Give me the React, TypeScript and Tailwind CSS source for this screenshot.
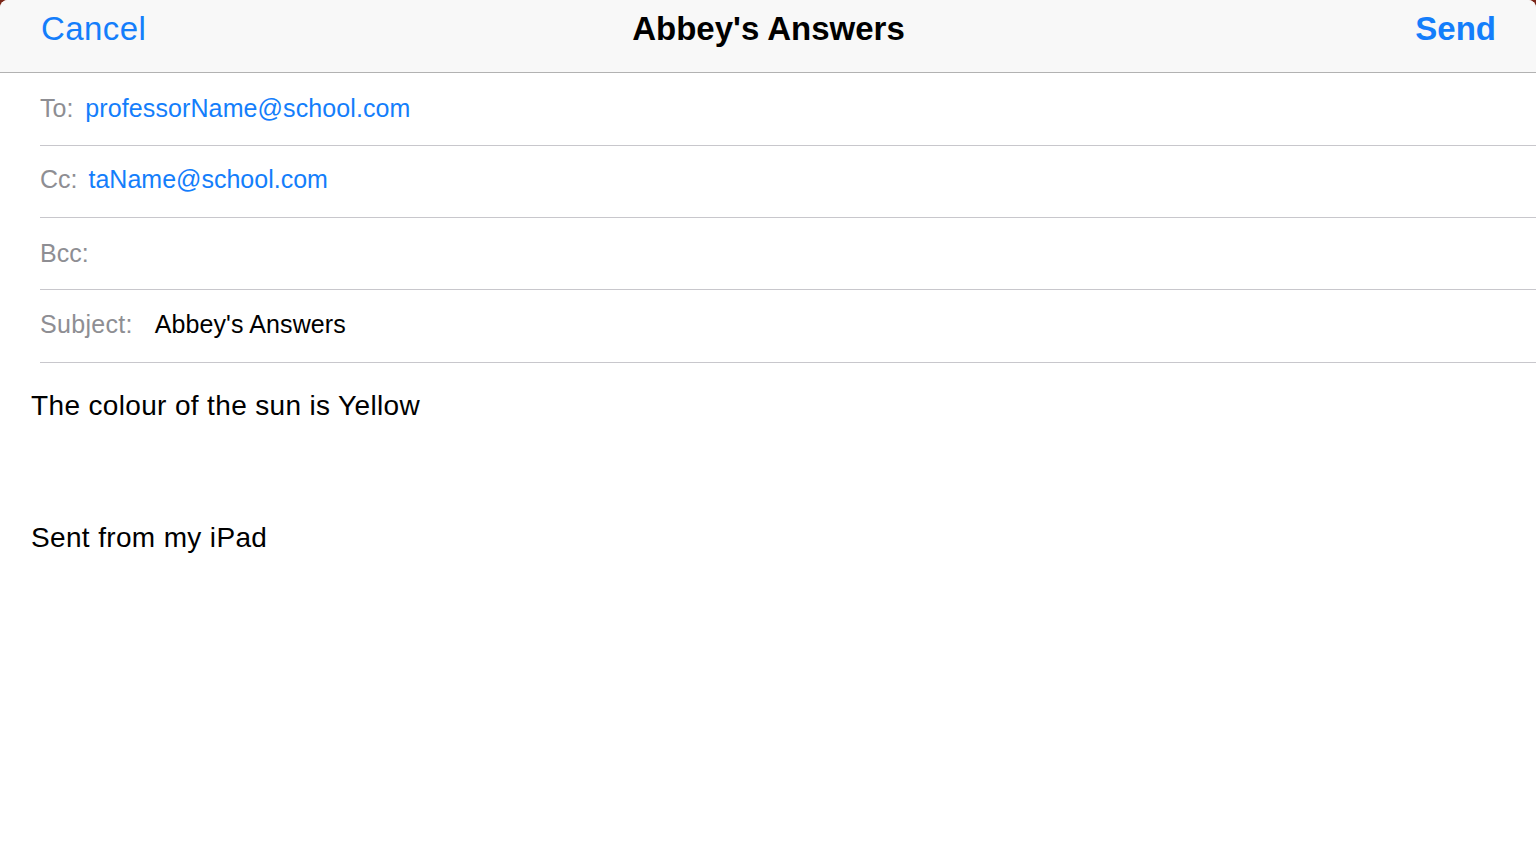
import React from "react";

export default function App() {
  const font = { fontFamily: '"Liberation Sans", Arial, sans-serif' };
  return (
    <div className="min-h-screen w-full bg-[#7a2618]" style={font}>
      <div className="min-h-screen w-full rounded-t-[8px] bg-white overflow-hidden">
        <header className="grid h-[73px] grid-cols-3 border-b border-[#b2b2b2] bg-[#f8f8f8] pt-[12px] pl-[41px] pr-[40px]">
          <span className="justify-self-start text-[33px] leading-[33px] tracking-[0.4px] text-[#147efb]">Cancel</span>
          <span className="justify-self-center whitespace-nowrap text-[33px] font-bold leading-[33px] text-black">
            Abbey's Answers
          </span>
          <span className="justify-self-end text-[33px] font-bold leading-[33px] text-[#147efb]">Send</span>
        </header>

        <div className="pl-[40px]">
          <div className="flex h-[73px] items-center border-b border-[#c8c7cc] text-[25px]">
            <span className="text-[#8e8e93]">To:</span>
            <span className="ml-[12px] tracking-[0.1px] text-[#147efb]">professorName@school.com</span>
          </div>
          <div className="flex h-[72px] items-center border-b border-[#c8c7cc] pb-[3px] text-[25px]">
            <span className="text-[#8e8e93]">Cc:</span>
            <span className="ml-[11px] text-[#147efb]">taName@school.com</span>
          </div>
          <div className="flex h-[72px] items-center border-b border-[#c8c7cc] text-[25px]">
            <span className="text-[#8e8e93]">Bcc:</span>
          </div>
          <div className="flex h-[73px] items-center border-b border-[#c8c7cc] pb-[3px] text-[25px]">
            <span className="text-[#8e8e93] tracking-[0.3px]">Subject:</span>
            <span className="ml-[22px] tracking-[0.1px] text-black">Abbey's Answers</span>
          </div>
        </div>

        <div className="pl-[31px] pt-[21px] text-[28px] leading-[44px] tracking-[0.35px] text-black">
          <div>The colour of the sun is Yellow</div>
          <div className="h-[44px]" />
          <div className="h-[44px]" />
          <div>Sent from my iPad</div>
        </div>
      </div>
    </div>
  );
}
